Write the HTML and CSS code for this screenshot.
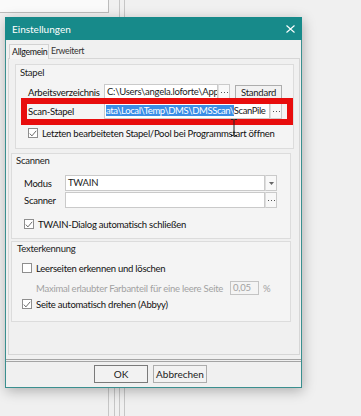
FILE: index.html
```html
<!DOCTYPE html>
<html lang="de">
<head>
    <meta charset="UTF-8">
    <meta name="viewport" content="width=device-width, initial-scale=1.0">
    <title>Einstellungen</title>
    <link rel="stylesheet" href="styles.css">
</head>
<body>
    <div class="desk">
        <!-- Fenster im Hintergrund -->
        <div class="bg-box"></div>
        <div class="bg-line bg-top1"></div>
        <div class="bg-line bg-top2"></div>
        <div class="bg-line bg-bot1"></div>
        <div class="bg-line bg-bot2"></div>
        <div class="bg-line bg-bot3"></div>
        <div class="bg-line bg-bot4"></div>

        <div class="dialog">
            <div class="titlebar">
                <span class="title">Einstellungen</span>
                <svg class="close" width="9" height="8" viewBox="0 0 9 8">
                    <path d="M0.5 0.5 L8.5 7.5 M8.5 0.5 L0.5 7.5" stroke="#fff" stroke-width="1.1" fill="none"/>
                </svg>
            </div>

            <div class="tabs">
                <div class="tab active">Allgemein</div>
                <div class="tab">Erweitert</div>
            </div>

            <div class="tabpage">
                <div class="group group-stapel">
                    <div class="caption">Stapel</div>
                    <div class="row">
                        <span class="lbl lbl-wide">Arbeitsverzeichnis</span>
                        <div class="edit edit-path">C:\Users\angela.loforte\App</div>
                        <div class="dots"><svg width="7" height="1" viewBox="0 0 7 1"><path d="M0 0h1v1H0zM3 0h1v1H3zM6 0h1v1H6z" fill="#555"/></svg></div>
                        <div class="btn btn-std">Standard</div>
                    </div>
                    <div class="row row-scan">
                        <span class="lbl lbl-wide">Scan-Stapel</span>
                        <div class="edit edit-scan"><span class="sel">ata\Local\Temp\DMS\DMSScan\</span>ScanPile</div>
                        <div class="dots"><svg width="7" height="1" viewBox="0 0 7 1"><path d="M0 0h1v1H0zM3 0h1v1H3zM6 0h1v1H6z" fill="#555"/></svg></div>
                    </div>
                    <div class="check check-stapel">
                        <span class="box"><svg width="8" height="7" viewBox="0 0 8 7"><path d="M0.8 3.6 L2.9 5.9 L7.2 0.8" stroke="#5a5a5a" stroke-width="0.9" fill="none"/></svg></span>
                        Letzten bearbeiteten Stapel/Pool bei Programmstart öffnen
                    </div>
                    <!-- Markierung und Mauszeiger liegen über dem Inhalt -->
                    <div class="marker"></div>
                    <svg class="cursor" width="8" height="17" viewBox="0 0 8 17">
                        <path d="M1 0.5 H3.5 M4.5 0.5 H7 M4 1 V16 M1 16.5 H3.5 M4.5 16.5 H7" stroke="#222" stroke-width="1" fill="none"/>
                    </svg>
                </div>

                <div class="group group-scan">
                    <div class="caption">Scannen</div>
                    <div class="row row-modus">
                        <span class="lbl lbl-short">Modus</span>
                        <div class="edit combo">TWAIN</div>
                        <div class="drop"><svg width="5" height="3" viewBox="0 0 5 3"><path d="M0 0 H5 L2.5 3 Z" fill="#666"/></svg></div>
                    </div>
                    <div class="row row-scanner">
                        <span class="lbl lbl-short">Scanner</span>
                        <div class="edit combo"></div>
                        <div class="dots"><svg width="7" height="1" viewBox="0 0 7 1"><path d="M0 0h1v1H0zM3 0h1v1H3zM6 0h1v1H6z" fill="#555"/></svg></div>
                    </div>
                    <div class="check check-twain">
                        <span class="box"><svg width="8" height="7" viewBox="0 0 8 7"><path d="M0.8 3.6 L2.9 5.9 L7.2 0.8" stroke="#5a5a5a" stroke-width="0.9" fill="none"/></svg></span>
                        TWAIN-Dialog automatisch schließen
                    </div>
                </div>

                <div class="group group-text">
                    <div class="caption caption-text">Texterkennung</div>
                    <div class="check check-leer">
                        <span class="box"></span>
                        Leerseiten erkennen und löschen
                    </div>
                    <div class="row row-farbe">
                        <span class="muted">Maximal erlaubter Farbanteil für eine leere Seite</span>
                        <div class="edit edit-num">0,05</div>
                        <span class="muted pct">%</span>
                    </div>
                    <div class="check check-dreh">
                        <span class="box"><svg width="8" height="7" viewBox="0 0 8 7"><path d="M0.8 3.6 L2.9 5.9 L7.2 0.8" stroke="#5a5a5a" stroke-width="0.9" fill="none"/></svg></span>
                        Seite automatisch drehen (Abbyy)
                    </div>
                </div>
            </div>

            <div class="footer">
                <div class="btn btn-ok">OK</div>
                <div class="btn btn-cancel">Abbrechen</div>
            </div>
        </div>
    </div>
</body>
</html>
```

FILE: styles.css
```css
* {
    box-sizing: border-box;
}
body {
    margin: 0;
    background: #f0f0f0;
    font-family: Lato, "Liberation Sans", sans-serif;
    font-size: 9.5px;
    letter-spacing: -0.25px;
    color: #1b1b1b;
}
.desk {
    position: relative;
    width: 361px;
    height: 416px;
    overflow: hidden;
    background: #f0f0f0;
}
/* Hintergrund-Fenster */
.bg-box {
    position: absolute;
    left: 0;
    top: 0;
    width: 109px;
    height: 13px;
    background: #fafafa;
    border-right: 1px solid #bcbcbc;
    border-bottom: 1px solid #bcbcbc;
}
.bg-line {
    position: absolute;
    width: 1px;
    background: #c6c6c6;
}
.bg-top1 { left: 119px; top: 0; height: 17px; }
.bg-top2 { left: 124px; top: 0; height: 17px; }
.bg-bot1 { left: 108px; top: 388px; height: 28px; }
.bg-bot2 { left: 114px; top: 388px; height: 28px; }
.bg-bot3 { left: 119px; top: 388px; height: 28px; }
.bg-bot4 { left: 124px; top: 388px; height: 28px; }

/* Dialog */
.dialog {
    position: absolute;
    left: 5px;
    top: 17px;
    width: 297px;
    height: 371px;
    background: #f0f0f0;
    border: 1px solid #3a8f8f;
    border-top: none;
    box-shadow: 1px 3px 12px rgba(0, 0, 0, 0.28);
    display: flex;
    flex-direction: column;
}
.titlebar {
    height: 23px;
    margin: 0 -1px;
    padding: 0 7px 0 7px;
    background: #178a8a;
    color: #fff;
    display: flex;
    align-items: center;
    justify-content: space-between;
    font-size: 10px;
    letter-spacing: 0;
}
.tabs {
    height: 18px;
    padding-left: 3px;
    display: flex;
    align-items: flex-end;
    font-size: 8.8px;
    letter-spacing: -0.3px;
}
.tab {
    height: 14px;
    line-height: 13px;
    padding: 0 2px;
    color: #333;
}
.tab.active {
    width: 40px;
    padding: 0 0 0 2px;
    border: 1px solid #d2d2d2;
    border-bottom: none;
    background: #f4f4f4;
    color: #111;
    margin-bottom: -1px;
    height: 15px;
    position: relative;
    z-index: 1;
}
.tabpage {
    height: 297px;
    margin: 0 1px 0 2px;
    border: 1px solid #d6d6d6;
    padding-top: 5px;
}

/* Gruppen */
.group {
    position: relative;
    border: 1px solid #dcdcdc;
    background: #f4f4f4;
}
.group-stapel {
    margin-left: 6px;
    width: 279px;
    height: 85px;
}
.group-scan {
    margin: 4px 0 0 2px;
    width: 280px;
    height: 86px;
}
.group-text {
    margin: 2px 0 0 2px;
    width: 280px;
    height: 81px;
}
.caption {
    height: 14px;
    line-height: 14px;
    padding-left: 4px;
    color: #222;
}
.group-stapel .caption {
    margin-top: 1px;
}
.caption-text {
    padding-left: 5px;
}
.row {
    display: flex;
    align-items: center;
    height: 16px;
    padding-left: 12px;
}
.group-stapel .row {
    margin-top: 4px;
}
.group-stapel .row-scan {
    margin-top: 3px;
}
.lbl {
    flex: none;
    color: #111;
}
.lbl-wide {
    width: 76px;
}
.lbl-short {
    width: 41px;
}
.edit {
    height: 16px;
    line-height: 14px;
    padding-left: 2px;
    background: #fff;
    border: 1px solid #cacaca;
    white-space: nowrap;
    overflow: hidden;
    flex: none;
}
.edit-path {
    width: 114px;
}
.edit-scan {
    width: 166px;
    padding-left: 1px;
    letter-spacing: -0.4px;
}
.sel {
    background: #3a8ee6;
    color: #fff;
}
.dots {
    flex: none;
    width: 12px;
    height: 16px;
    border: 1px solid #cacaca;
    border-left: 1px solid #dedede;
    background: #f8f8f8;
    display: flex;
    align-items: center;
    justify-content: center;
}
.btn {
    flex: none;
    height: 15px;
    line-height: 13px;
    text-align: center;
    border: 1px solid #adadad;
    background: #f2f2f2;
    color: #1b1b1b;
}
.btn-std {
    width: 47px;
    margin-left: 5px;
}

/* Checkboxen */
.check {
    display: flex;
    align-items: center;
    height: 14px;
    gap: 4px;
    color: #111;
}
.box {
    flex: none;
    width: 10px;
    height: 10px;
    border: 1px solid #8e8e8e;
    background: #fff;
    display: flex;
    align-items: center;
    justify-content: center;
}
.check-stapel {
    margin-top: 7px;
    padding-left: 12px;
}
.check-twain {
    margin-top: 9px;
    padding-left: 12px;
}
.check-leer {
    margin-top: 5px;
    padding-left: 10px;
}
.check-dreh {
    margin-top: 2px;
    padding-left: 10px;
}

/* Scannen */
.row-modus {
    margin-top: 7px;
}
.row-scanner {
    margin-top: 1px;
}
.combo {
    width: 200px;
}
.drop {
    flex: none;
    width: 12px;
    height: 16px;
    border: 1px solid #cacaca;
    border-left: 1px solid #dedede;
    background: #f8f8f8;
    display: flex;
    align-items: center;
    justify-content: center;
}

/* Texterkennung */
.row-farbe {
    margin-top: 6px;
    height: 14px;
    padding-left: 24px;
}
.muted {
    color: #a2a2a2;
}
.row-farbe .muted:first-child {
    width: 194px;
    white-space: nowrap;
}
.edit-num {
    width: 29px;
    height: 14px;
    line-height: 12px;
    background: #f4f4f4;
    border-color: #c4c4c4;
    color: #a2a2a2;
}
.pct {
    margin-left: 4px;
}

/* rote Markierung und Cursor */
.marker {
    position: absolute;
    left: 5px;
    top: 33px;
    width: 272px;
    height: 27px;
    border: 6px solid #e80d0d;
}
.cursor {
    position: absolute;
    left: 214px;
    top: 54px;
}

/* Fußleiste */
.footer {
    margin-top: 4px;
    border-top: 3px double #a4a4a4;
    padding: 3px 0 4px 88px;
    display: flex;
    gap: 5px;
}
.footer .btn {
    width: 54px;
    height: 18px;
    line-height: 16px;
    font-size: 10px;
    letter-spacing: 0;
}
.btn-ok {
    border-color: #7a7a7a;
}
```
